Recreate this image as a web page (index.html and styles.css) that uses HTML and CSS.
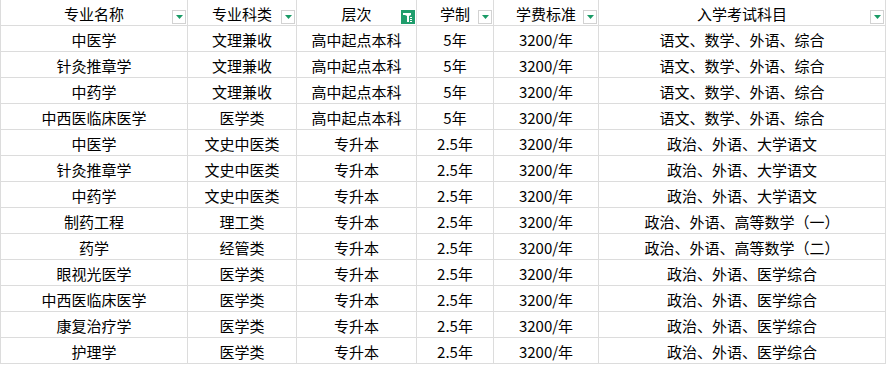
FILE: index.html
```html
<!DOCTYPE html>
<html lang="zh-CN">
<head>
<meta charset="utf-8">
<title>专业表</title>
<link rel="stylesheet" href="styles.css">
</head>
<body>
<div class="sheet">
  <div class="cell head">专业名称<span class="fbtn"><svg width="7" height="4" viewBox="0 0 7 4"><polygon points="0,0 7,0 3.5,4" fill="#1a9b66"/></svg></span></div>
  <div class="cell head">专业科类<span class="fbtn"><svg width="7" height="4" viewBox="0 0 7 4"><polygon points="0,0 7,0 3.5,4" fill="#1a9b66"/></svg></span></div>
  <div class="cell head">层次<span class="fbtn active"><svg width="14" height="14" viewBox="0 0 14 14"><path d="M2 3H10V5L8 6V12H6V6L4 5V5H2Z" fill="#fff"/><rect x="9" y="7" width="2" height="1" fill="#fff"/><rect x="9" y="9" width="2" height="1" fill="#fff"/><rect x="9" y="11" width="2" height="1" fill="#fff"/></svg></span></div>
  <div class="cell head">学制<span class="fbtn"><svg width="7" height="4" viewBox="0 0 7 4"><polygon points="0,0 7,0 3.5,4" fill="#1a9b66"/></svg></span></div>
  <div class="cell head">学费标准<span class="fbtn"><svg width="7" height="4" viewBox="0 0 7 4"><polygon points="0,0 7,0 3.5,4" fill="#1a9b66"/></svg></span></div>
  <div class="cell head">入学考试科目<span class="fbtn"><svg width="7" height="4" viewBox="0 0 7 4"><polygon points="0,0 7,0 3.5,4" fill="#1a9b66"/></svg></span></div>

  <div class="cell">中医学</div><div class="cell">文理兼收</div><div class="cell">高中起点本科</div><div class="cell">5年</div><div class="cell">3200/年</div><div class="cell">语文、数学、外语、综合</div>
  <div class="cell">针灸推章学</div><div class="cell">文理兼收</div><div class="cell">高中起点本科</div><div class="cell">5年</div><div class="cell">3200/年</div><div class="cell">语文、数学、外语、综合</div>
  <div class="cell">中药学</div><div class="cell">文理兼收</div><div class="cell">高中起点本科</div><div class="cell">5年</div><div class="cell">3200/年</div><div class="cell">语文、数学、外语、综合</div>
  <div class="cell">中西医临床医学</div><div class="cell">医学类</div><div class="cell">高中起点本科</div><div class="cell">5年</div><div class="cell">3200/年</div><div class="cell">语文、数学、外语、综合</div>
  <div class="cell">中医学</div><div class="cell">文史中医类</div><div class="cell">专升本</div><div class="cell">2.5年</div><div class="cell">3200/年</div><div class="cell">政治、外语、大学语文</div>
  <div class="cell">针灸推章学</div><div class="cell">文史中医类</div><div class="cell">专升本</div><div class="cell">2.5年</div><div class="cell">3200/年</div><div class="cell">政治、外语、大学语文</div>
  <div class="cell">中药学</div><div class="cell">文史中医类</div><div class="cell">专升本</div><div class="cell">2.5年</div><div class="cell">3200/年</div><div class="cell">政治、外语、大学语文</div>
  <div class="cell">制药工程</div><div class="cell">理工类</div><div class="cell">专升本</div><div class="cell">2.5年</div><div class="cell">3200/年</div><div class="cell">政治、外语、高等数学（一）</div>
  <div class="cell">药学</div><div class="cell">经管类</div><div class="cell">专升本</div><div class="cell">2.5年</div><div class="cell">3200/年</div><div class="cell">政治、外语、高等数学（二）</div>
  <div class="cell">眼视光医学</div><div class="cell">医学类</div><div class="cell">专升本</div><div class="cell">2.5年</div><div class="cell">3200/年</div><div class="cell">政治、外语、医学综合</div>
  <div class="cell">中西医临床医学</div><div class="cell">医学类</div><div class="cell">专升本</div><div class="cell">2.5年</div><div class="cell">3200/年</div><div class="cell">政治、外语、医学综合</div>
  <div class="cell">康复治疗学</div><div class="cell">医学类</div><div class="cell">专升本</div><div class="cell">2.5年</div><div class="cell">3200/年</div><div class="cell">政治、外语、医学综合</div>
  <div class="cell">护理学</div><div class="cell">医学类</div><div class="cell">专升本</div><div class="cell">2.5年</div><div class="cell">3200/年</div><div class="cell">政治、外语、医学综合</div>
</div>
</body>
</html>
```
FILE: styles.css
```css
html, body {
  margin: 0;
  padding: 0;
  background: #ffffff;
}
.sheet {
  display: grid;
  grid-template-columns: 187px 109px 120px 77px 105px 287px;
  grid-auto-rows: 26px;
  width: 885px;
  border-left: 1px solid #dcdcdc;
  font-family: "Noto Sans CJK SC", "Noto Sans", sans-serif;
  font-size: 15px;
  color: #000;
}
.cell {
  position: relative;
  box-sizing: border-box;
  border-right: 1px solid #dcdcdc;
  border-bottom: 1px solid #dcdcdc;
  display: flex;
  align-items: center;
  justify-content: center;
  padding-top: 2px;
  line-height: 20px;
  white-space: nowrap;
}
.fbtn {
  position: absolute;
  right: 1px;
  bottom: 1px;
  width: 14px;
  height: 14px;
  box-sizing: border-box;
  border: 1px solid #d2d2d2;
  background: #fff;
  display: flex;
  align-items: center;
  justify-content: center;
}
.fbtn svg {
  display: block;
}
.fbtn.active {
  border: none;
  background: #1f9d6c;
}
```
